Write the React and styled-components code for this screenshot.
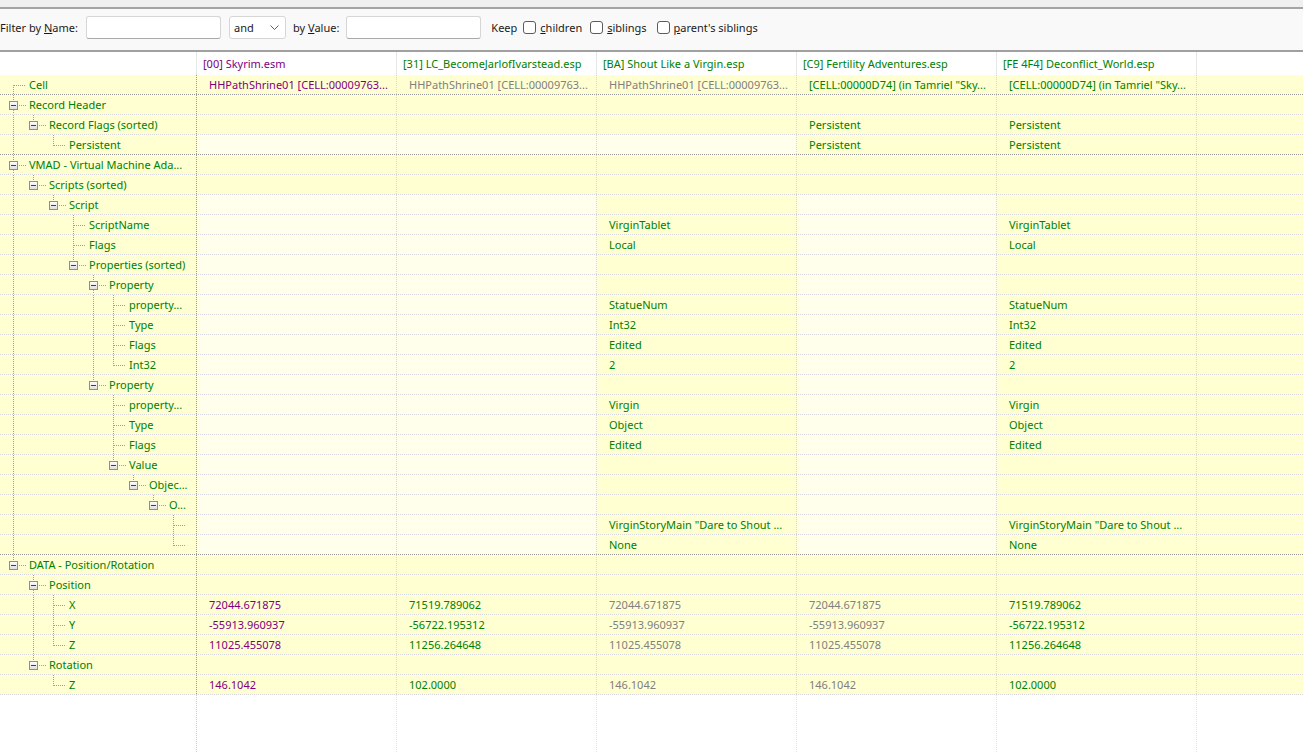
import styled, { createGlobalStyle } from "styled-components";

const PURPLE = "#800080";
const GREEN = "#008000";
const GRAY = "#808080";

const GlobalStyle = createGlobalStyle`
  html, body {
    margin: 0;
    padding: 0;
    background: #ffffff;
  }
  body {
    font-family: "Noto Sans", "Segoe UI", sans-serif;
    font-size: 11px;
  }
`;

const Window = styled.div`
  height: 100vh;
  display: flex;
  flex-direction: column;
  overflow: hidden;
  background: #ffffff;
`;

const TopStrip = styled.div`
  height: 7px;
  background: #f0f0f0;
  border-bottom: 2px solid #a4a4a4;
`;

// 필터 툴바
const Toolbar = styled.div`
  height: 43px;
  box-sizing: border-box;
  padding-top: 7px;
  display: flex;
  flex-direction: row;
  align-items: flex-start;
  background: #f9f9f9;
  border-bottom: 2px solid #a0a0a0;
  color: #1a1a1a;
`;

const ToolLabel = styled.div`
  height: 23px;
  line-height: 23px;
  margin-left: ${(p) => p.$gap || 0}px;
  white-space: nowrap;
`;

const TextBox = styled.div`
  width: 135px;
  height: 23px;
  box-sizing: border-box;
  margin-left: ${(p) => p.$gap || 0}px;
  background: #ffffff;
  border: 1px solid #d6d6d6;
  border-bottom-color: #a8a8a8;
  border-radius: 3px;
`;

const Combo = styled.div`
  width: 57px;
  height: 23px;
  box-sizing: border-box;
  margin-left: 8px;
  padding: 0 6px 0 4px;
  display: flex;
  align-items: center;
  justify-content: space-between;
  background: #ffffff;
  border: 1px solid #d6d6d6;
  border-radius: 3px;
`;

const CheckItem = styled.div`
  display: flex;
  align-items: center;
  height: 23px;
  margin-left: ${(p) => p.$gap || 0}px;
  white-space: nowrap;
`;

const CheckBox = styled.span`
  width: 13px;
  height: 13px;
  box-sizing: border-box;
  margin-right: 4px;
  border: 1px solid #5c5c5c;
  border-radius: 3px;
  background: #ffffff;
`;

// 그리드
const gridColumns = "197px repeat(5, 200px) 1fr";

const HeaderRow = styled.div`
  display: grid;
  grid-template-columns: ${gridColumns};
  height: 23px;
  background: #ffffff;
`;

const HeaderCell = styled.div`
  border-right: ${(p) => (p.$last ? "none" : "1px solid #e5e5e5")};
  padding-left: 6px;
  line-height: 23px;
  white-space: nowrap;
  overflow: hidden;
  color: ${(p) => p.$color};
`;

const Row = styled.div`
  display: grid;
  grid-template-columns: ${gridColumns};
  height: 20px;
  box-sizing: border-box;
  background: #ffffd2;
  border-bottom: 1px dotted ${(p) => (p.$strong ? "#9a9a9a" : "#d8d8dc")};
`;

const TreeCell = styled.div`
  display: flex;
  flex-direction: row;
  align-items: flex-start;
  border-right: 1px dotted #9a9a9a;
  overflow: hidden;
  white-space: nowrap;
`;

const TreeLabel = styled.div`
  margin-left: 2px;
  line-height: 19px;
  color: ${GREEN};
`;

const DataCell = styled.div`
  border-right: ${(p) => (p.$last ? "none" : "1px dotted #d8d8dc")};
  background: ${(p) => (p.$light ? "#ffffeb" : "transparent")};
  padding-left: 12px;
  line-height: 19px;
  white-space: nowrap;
  overflow: hidden;
  color: ${(p) => p.$color};
`;

const Filler = styled.div`
  flex: 1;
  display: grid;
  grid-template-columns: ${gridColumns};
  background: #ffffff;
`;

const FillerCell = styled.div`
  border-right: ${(p) =>
    p.$last ? "none" : p.$tree ? "1px dotted #c8c8c8" : "1px dotted #e4e4e8"};
`;

const columns = [
  { name: "[00] Skyrim.esm", color: PURPLE },
  { name: "[31] LC_BecomeJarlofIvarstead.esp", color: GREEN },
  { name: "[BA] Shout Like a Virgin.esp", color: GREEN },
  { name: "[C9] Fertility Adventures.esp", color: GREEN },
  { name: "[FE 4F4] Deconflict_World.esp", color: GREEN },
];

const P = (t) => [t, PURPLE];
const G = (t) => [t, GREEN];
const X = (t) => [t, GRAY];
const E = null;

const vmad = (a, b) => [E, E, a ? G(a) : E, E, b ? G(b) : E];
const LIGHT_VMAD = [0, 1, 3];

const rows = [
  {
    label: "Cell",
    level: 0,
    strong: true,
    cells: [
      P("HHPathShrine01 [CELL:00009763..."),
      X("HHPathShrine01 [CELL:00009763..."),
      X("HHPathShrine01 [CELL:00009763..."),
      G('[CELL:00000D74] (in Tamriel "Sky...'),
      G('[CELL:00000D74] (in Tamriel "Sky...'),
    ],
  },
  { label: "Record Header", level: 0, open: true },
  {
    label: "Record Flags (sorted)",
    level: 1,
    open: true,
    cells: [E, E, E, G("Persistent"), G("Persistent")],
  },
  {
    label: "Persistent",
    level: 2,
    strong: true,
    light: [0, 1, 2],
    cells: [E, E, E, G("Persistent"), G("Persistent")],
  },
  { label: "VMAD - Virtual Machine Ada...", level: 0, open: true },
  { label: "Scripts (sorted)", level: 1, open: true },
  { label: "Script", level: 2, open: true, light: LIGHT_VMAD },
  { label: "ScriptName", level: 3, light: LIGHT_VMAD, cells: vmad("VirginTablet", "VirginTablet") },
  { label: "Flags", level: 3, light: LIGHT_VMAD, cells: vmad("Local", "Local") },
  { label: "Properties (sorted)", level: 3, open: true, light: LIGHT_VMAD },
  { label: "Property", level: 4, open: true, light: LIGHT_VMAD },
  { label: "property...", level: 5, light: LIGHT_VMAD, cells: vmad("StatueNum", "StatueNum") },
  { label: "Type", level: 5, light: LIGHT_VMAD, cells: vmad("Int32", "Int32") },
  { label: "Flags", level: 5, light: LIGHT_VMAD, cells: vmad("Edited", "Edited") },
  { label: "Int32", level: 5, light: LIGHT_VMAD, cells: vmad("2", "2") },
  { label: "Property", level: 4, open: true, light: LIGHT_VMAD },
  { label: "property...", level: 5, light: LIGHT_VMAD, cells: vmad("Virgin", "Virgin") },
  { label: "Type", level: 5, light: LIGHT_VMAD, cells: vmad("Object", "Object") },
  { label: "Flags", level: 5, light: LIGHT_VMAD, cells: vmad("Edited", "Edited") },
  { label: "Value", level: 5, open: true, light: LIGHT_VMAD },
  { label: "Objec...", level: 6, open: true, light: LIGHT_VMAD },
  { label: "O...", level: 7, open: true, light: LIGHT_VMAD },
  {
    label: "",
    level: 8,
    light: LIGHT_VMAD,
    cells: vmad('VirginStoryMain "Dare to Shout ...', 'VirginStoryMain "Dare to Shout ...'),
  },
  { label: "", level: 8, strong: true, light: LIGHT_VMAD, cells: vmad("None", "None") },
  { label: "DATA - Position/Rotation", level: 0, open: true },
  { label: "Position", level: 1, open: true },
  {
    label: "X",
    level: 2,
    cells: [P("72044.671875"), G("71519.789062"), X("72044.671875"), X("72044.671875"), G("71519.789062")],
  },
  {
    label: "Y",
    level: 2,
    cells: [P("-55913.960937"), G("-56722.195312"), X("-55913.960937"), X("-55913.960937"), G("-56722.195312")],
  },
  {
    label: "Z",
    level: 2,
    cells: [P("11025.455078"), G("11256.264648"), X("11025.455078"), X("11025.455078"), G("11256.264648")],
  },
  { label: "Rotation", level: 1, open: true },
  {
    label: "Z",
    level: 2,
    cells: [P("146.1042"), G("102.0000"), X("146.1042"), X("146.1042"), G("102.0000")],
  },
];

// 같은 레벨의 형제가 뒤에 있는지
const hasLaterAt = (i, k) => {
  for (let j = i + 1; j < rows.length; j++) {
    if (rows[j].level < k) return false;
    if (rows[j].level === k) return true;
  }
  return false;
};

const Dot = ({ x1, y1, x2, y2 }) => (
  <line
    x1={x1}
    y1={y1}
    x2={x2}
    y2={y2}
    stroke="#a0a0a0"
    strokeDasharray="1 1"
    shapeRendering="crispEdges"
  />
);

const TreeGuides = ({ index }) => {
  const { level, open } = rows[index];
  const w = 27 + level * 20;
  const cx = 13 + level * 20;
  const first = index === 0;
  const next = hasLaterAt(index, level);
  const lines = [];
  for (let k = 0; k < level; k++) {
    if (hasLaterAt(index, k)) {
      const x = 13 + k * 20 + 0.5;
      lines.push(<Dot key={"a" + k} x1={x} y1={0} x2={x} y2={20} />);
    }
  }
  const vx = cx + 0.5;
  if (open) {
    if (!first) lines.push(<Dot key="t" x1={vx} y1={0} x2={vx} y2={6} />);
    if (next) lines.push(<Dot key="b" x1={vx} y1={15} x2={vx} y2={20} />);
    lines.push(<Dot key="h" x1={cx + 6} y1={10.5} x2={w - 1} y2={10.5} />);
  } else {
    lines.push(
      <Dot key="v" x1={vx} y1={first ? 10 : 0} x2={vx} y2={next ? 20 : 11} />
    );
    lines.push(<Dot key="h" x1={cx + 1} y1={10.5} x2={w - 1} y2={10.5} />);
  }
  return (
    <svg width={w} height={19} style={{ flex: "none", overflow: "visible" }}>
      <defs>
        <linearGradient id="exp" x1="0" y1="0" x2="0" y2="1">
          <stop offset="0" stopColor="#ffffff" />
          <stop offset="1" stopColor="#dcdcdc" />
        </linearGradient>
      </defs>
      {lines}
      {open && (
        <g shapeRendering="crispEdges">
          <rect
            x={cx - 4 + 0.5}
            y={6.5}
            width={8}
            height={8}
            fill="url(#exp)"
            stroke="#8e8e8e"
          />
          <line x1={cx - 2} y1={10.5} x2={cx + 3} y2={10.5} stroke="#233f8f" />
        </g>
      )}
    </svg>
  );
};

const ChevronDown = () => (
  <svg width="9" height="5" viewBox="0 0 9 5">
    <path d="M0.5 0.5 L4.5 4.5 L8.5 0.5" fill="none" stroke="#606060" strokeWidth="1" />
  </svg>
);

const FilterBar = () => (
  <Toolbar>
    <ToolLabel>
      Filter by <u>N</u>ame:
    </ToolLabel>
    <TextBox $gap={8} />
    <Combo>
      <span>and</span>
      <ChevronDown />
    </Combo>
    <ToolLabel $gap={7}>
      by <u>V</u>alue:
    </ToolLabel>
    <TextBox $gap={7} />
    <ToolLabel $gap={10}>Keep</ToolLabel>
    <CheckItem $gap={6}>
      <CheckBox />
      <span>
        <u>c</u>hildren
      </span>
    </CheckItem>
    <CheckItem $gap={8}>
      <CheckBox />
      <span>
        <u>s</u>iblings
      </span>
    </CheckItem>
    <CheckItem $gap={10}>
      <CheckBox />
      <span>
        <u>p</u>arent's siblings
      </span>
    </CheckItem>
  </Toolbar>
);

export default function App() {
  return (
    <Window>
      <GlobalStyle />
      <TopStrip />
      <FilterBar />
      <HeaderRow>
        <HeaderCell />
        {columns.map((c) => (
          <HeaderCell key={c.name} $color={c.color}>
            {c.name}
          </HeaderCell>
        ))}
        <HeaderCell $last />
      </HeaderRow>
      {rows.map((r, i) => (
        <Row key={i} $strong={r.strong}>
          <TreeCell>
            <TreeGuides index={i} />
            <TreeLabel>{r.label}</TreeLabel>
          </TreeCell>
          {[0, 1, 2, 3, 4].map((c) => {
            const v = r.cells ? r.cells[c] : null;
            return (
              <DataCell
                key={c}
                $light={r.light && r.light.includes(c)}
                $color={v ? v[1] : GREEN}
              >
                {v ? v[0] : ""}
              </DataCell>
            );
          })}
          <DataCell $last />
        </Row>
      ))}
      <Filler>
        <FillerCell $tree />
        <FillerCell />
        <FillerCell />
        <FillerCell />
        <FillerCell />
        <FillerCell />
        <FillerCell $last />
      </Filler>
    </Window>
  );
}
